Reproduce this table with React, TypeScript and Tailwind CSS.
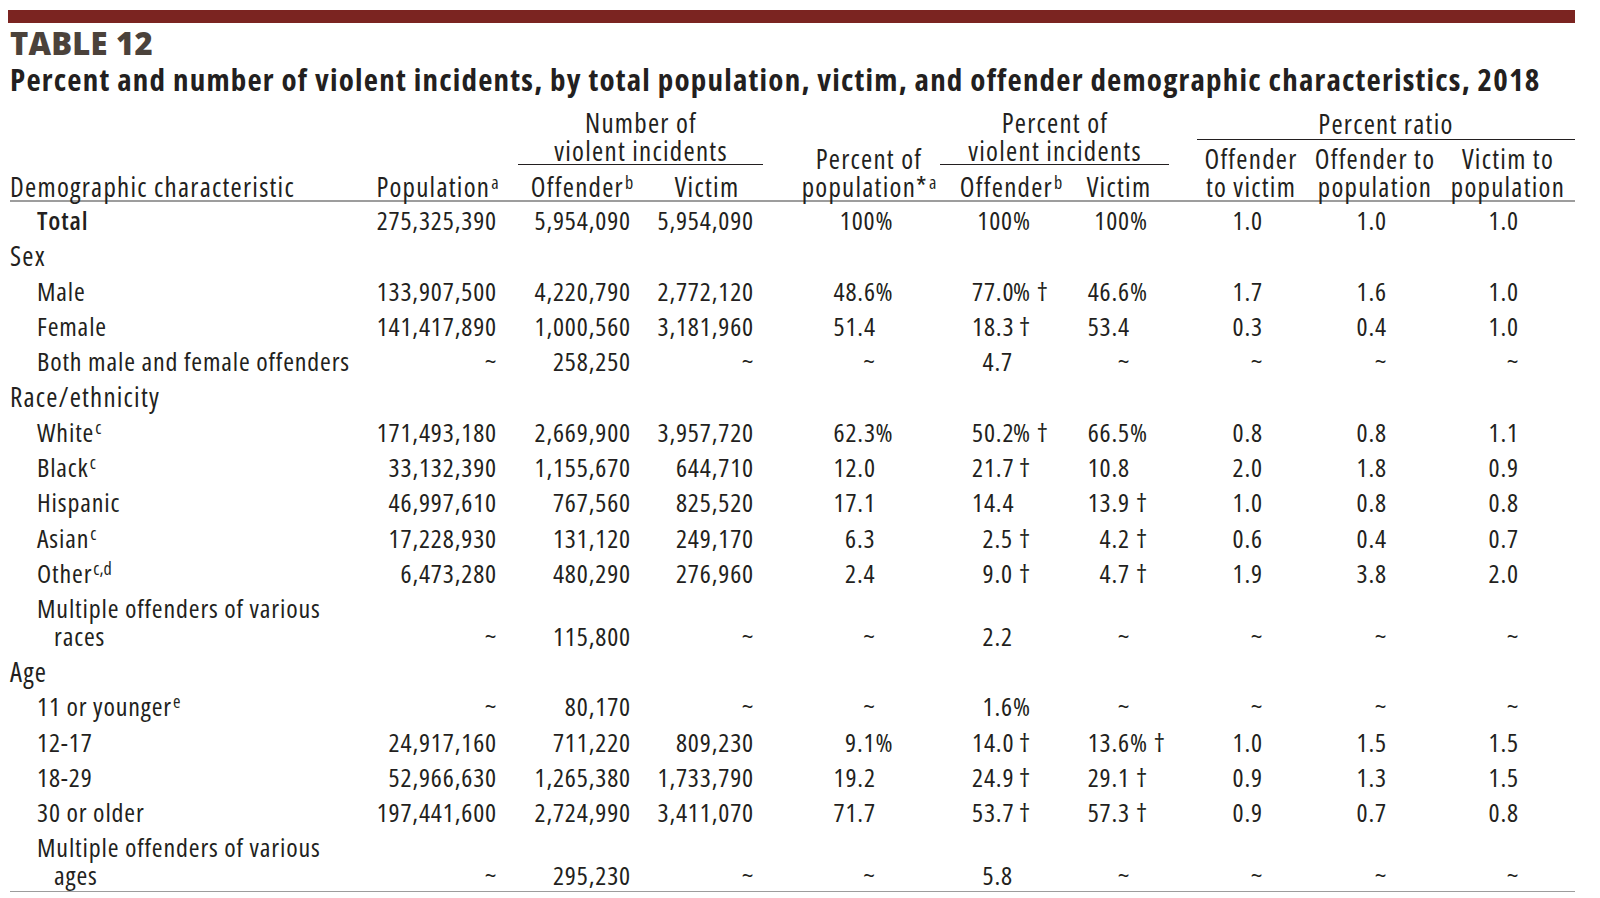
import React from "react";

type Pct = [string, string] | string;
type Row = {
  label: React.ReactNode;
  label2?: string;
  kind: "total" | "group" | "item";
  cells?: [string, string, string, Pct, Pct, Pct, string, string, string];
};

function Sup({ children }: { children: React.ReactNode }) {
  return <span className="relative top-[-8px] text-[18px] leading-none ml-[1px] tracking-normal">{children}</span>;
}

const rows: Row[] = [
  { label: "Total", kind: "total", cells: ["275,325,390", "5,954,090", "5,954,090", ["100", "%"], ["100", "%"], ["100", "%"], "1.0", "1.0", "1.0"] },
  { label: "Sex", kind: "group" },
  { label: "Male", kind: "item", cells: ["133,907,500", "4,220,790", "2,772,120", ["48.6", "%"], ["77.0", "% †"], ["46.6", "%"], "1.7", "1.6", "1.0"] },
  { label: "Female", kind: "item", cells: ["141,417,890", "1,000,560", "3,181,960", "51.4", ["18.3", " †"], "53.4", "0.3", "0.4", "1.0"] },
  { label: "Both male and female offenders", kind: "item", cells: ["~", "258,250", "~", "~", "4.7", "~", "~", "~", "~"] },
  { label: "Race/ethnicity", kind: "group" },
  { label: <>White<Sup>c</Sup></>, kind: "item", cells: ["171,493,180", "2,669,900", "3,957,720", ["62.3", "%"], ["50.2", "% †"], ["66.5", "%"], "0.8", "0.8", "1.1"] },
  { label: <>Black<Sup>c</Sup></>, kind: "item", cells: ["33,132,390", "1,155,670", "644,710", "12.0", ["21.7", " †"], "10.8", "2.0", "1.8", "0.9"] },
  { label: "Hispanic", kind: "item", cells: ["46,997,610", "767,560", "825,520", "17.1", "14.4", ["13.9", " †"], "1.0", "0.8", "0.8"] },
  { label: <>Asian<Sup>c</Sup></>, kind: "item", cells: ["17,228,930", "131,120", "249,170", "6.3", ["2.5", " †"], ["4.2", " †"], "0.6", "0.4", "0.7"] },
  { label: <>Other<Sup>c,d</Sup></>, kind: "item", cells: ["6,473,280", "480,290", "276,960", "2.4", ["9.0", " †"], ["4.7", " †"], "1.9", "3.8", "2.0"] },
  { label: "Multiple offenders of various", label2: "races", kind: "item", cells: ["~", "115,800", "~", "~", "2.2", "~", "~", "~", "~"] },
  { label: "Age", kind: "group" },
  { label: <>11 or younger<Sup>e</Sup></>, kind: "item", cells: ["~", "80,170", "~", "~", ["1.6", "%"], "~", "~", "~", "~"] },
  { label: "12-17", kind: "item", cells: ["24,917,160", "711,220", "809,230", ["9.1", "%"], ["14.0", " †"], ["13.6", "% †"], "1.0", "1.5", "1.5"] },
  { label: "18-29", kind: "item", cells: ["52,966,630", "1,265,380", "1,733,790", "19.2", ["24.9", " †"], ["29.1", " †"], "0.9", "1.3", "1.5"] },
  { label: "30 or older", kind: "item", cells: ["197,441,600", "2,724,990", "3,411,070", "71.7", ["53.7", " †"], ["57.3", " †"], "0.9", "0.7", "0.8"] },
  { label: "Multiple offenders of various", label2: "ages", kind: "item", cells: ["~", "295,230", "~", "~", "5.8", "~", "~", "~", "~"] },
];

function PctCell({ v, w, pl, cls }: { v: Pct; w: string; pl: string; cls: string }) {
  const [num, suf] = typeof v === "string" ? [v, ""] : v;
  return (
    <div className={`flex ${cls} ${pl}`}>
      <span className={`${w} text-right shrink-0`}>{num}</span>
      <span className="whitespace-pre">{suf}</span>
    </div>
  );
}

function BodyRow({ r, last }: { r: Row; last: boolean }) {
  const c = r.cells;
  const pad = last ? "pt-[3.85px] pb-[1px]" : "py-[3.85px]";
  return (
    <div className={`flex items-end ${pad} leading-[27.6px]`}>
      <div className="w-[360px] shrink-0">
        {r.kind === "group" ? (
          <div className="font-medium text-[27px] tracking-[1.2px]">{r.label}</div>
        ) : r.kind === "total" ? (
          <div className="pl-[27px] font-semibold">{r.label}</div>
        ) : (
          <>
            <div className="pl-[27px] whitespace-nowrap">{r.label}</div>
            {r.label2 && <div className="pl-[44px]">{r.label2}</div>}
          </>
        )}
      </div>
      {c && (
        <>
          <div className="w-[135px] shrink-0 text-right pr-[8px]">{c[0]}</div>
          <div className="w-[135px] shrink-0 text-right pr-[9px]">{c[1]}</div>
          <div className="w-[130px] shrink-0 text-right pr-[16px]">{c[2]}</div>
          <PctCell v={c[3]} cls="w-[150px] shrink-0" pl="pl-[63.5px]" w="w-[42px]" />
          <PctCell v={c[4]} cls="w-[140px] shrink-0" pl="pl-[52px]" w="w-[41px]" />
          <PctCell v={c[5]} cls="w-[115px] shrink-0" pl="pl-[27px]" w="w-[43px]" />
          <div className="w-[145px] shrink-0 text-right pr-[57px]">{c[6]}</div>
          <div className="w-[125px] shrink-0 text-right pr-[58px]">{c[7]}</div>
          <div className="w-[130px] shrink-0 text-right pr-[56px]">{c[8]}</div>
        </>
      )}
    </div>
  );
}

function H({ children, cls }: { children: React.ReactNode; cls: string }) {
  return <div className={`flex flex-col items-center whitespace-nowrap ${cls}`}>{children}</div>;
}

export default function App() {
  return (
    <div className="min-h-[898px] bg-white pt-[10px] pl-[8px] pr-[25px] text-[#231f20] font-['Open_Sans',sans-serif]">
      <div className="h-[12.5px] bg-[#7b2421]" />
      <div className="pl-[2px]">
        <div className="mt-[2px] text-[31px] leading-[36px] font-extrabold text-[#4b423b] tracking-[0.2px]">TABLE 12</div>
        <div className="text-[31px] leading-[36px] font-bold [font-stretch:75%] tracking-[1.2px] whitespace-nowrap">
          Percent and number of violent incidents, by total population, victim, and offender demographic characteristics, 2018
        </div>

        <div className="[font-stretch:75%] text-[26px] tracking-[0.85px]">
          {/* Header */}
          <div className="flex items-end mt-[12.6px] leading-[27.6px] font-medium text-[27px] tracking-[1.25px]">
            <H cls="w-[360px] shrink-0 !items-start">Demographic characteristic</H>
            <H cls="w-[135px] shrink-0"><span>Population<Sup>a</Sup></span></H>
            <div className="w-[265px] shrink-0 flex flex-col">
              <div className="flex flex-col items-center pl-[7px]">
                <span>Number of</span>
                <span>violent incidents</span>
              </div>
              <div className="ml-[13px] mr-[7px] h-[1px] bg-[#231f20]" />
              <div className="flex mt-[7.3px]">
                <H cls="w-[135px] shrink-0 pl-[19px]"><span>Offender<Sup>b</Sup></span></H>
                <H cls="w-[130px] shrink-0 pl-[4px]">Victim</H>
              </div>
            </div>
            <H cls="w-[150px] shrink-0 pl-[48px]">
              <span>Percent of</span>
              <span>population*<Sup>a</Sup></span>
            </H>
            <div className="w-[255px] shrink-0 flex flex-col">
              <div className="flex flex-col items-center pl-[15px]">
                <span>Percent of</span>
                <span>violent incidents</span>
              </div>
              <div className="ml-[20px] mr-[6px] h-[1px] bg-[#231f20]" />
              <div className="flex mt-[7.3px]">
                <H cls="w-[140px] shrink-0 pl-[42px]"><span>Offender<Sup>b</Sup></span></H>
                <H cls="w-[115px] shrink-0 pl-[3px]">Victim</H>
              </div>
            </div>
            <div className="w-[400px] shrink-0 flex flex-col">
              <div className="flex flex-col items-center pl-[22px]">Percent ratio</div>
              <div className="ml-[22px] mt-[2px] h-[1px] bg-[#231f20]" />
              <div className="flex mt-[4.9px]">
                <H cls="w-[145px] shrink-0 pl-[7px]">
                  <span>Offender</span>
                  <span>to victim</span>
                </H>
                <H cls="w-[125px] shrink-0 pr-[15px]">
                  <span>Offender to</span>
                  <span>population</span>
                </H>
                <H cls="w-[130px] shrink-0 pr-[4px]">
                  <span>Victim to</span>
                  <span>population</span>
                </H>
              </div>
            </div>
          </div>
          <div className="h-[1.5px] bg-[#9d9d9d]" />
          {/* Body */}
          <div className="pt-[1.5px]">
            {rows.map((r, i) => (
              <BodyRow key={i} r={r} last={i === rows.length - 1} />
            ))}
          </div>
          <div className="h-[1.5px] bg-[#9d9d9d]" />
        </div>
      </div>
    </div>
  );
}
